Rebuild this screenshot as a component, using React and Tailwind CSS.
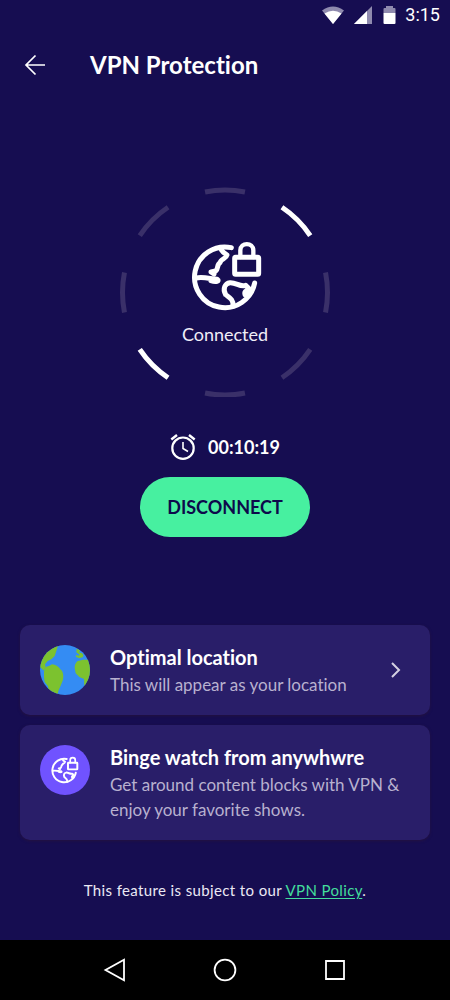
import React from 'react';

function StatusBar() {
  return (
    <div className="flex h-[30px] items-center justify-end gap-[9px] pr-[10px] font-[Roboto,sans-serif]">
      <svg className="h-[18px] w-6" viewBox="0 0 24 18" aria-hidden="true">
        <path d="M1 4.5Q12-3.5 23 4.5L12 18Z" fill="#8f8aae" />
        <path d="M3.5 7.5Q12 1.8 20.5 7.5L12 18Z" fill="#fff" />
      </svg>
      <svg className="h-[18px] w-[18px]" viewBox="0 0 18 18" aria-hidden="true">
        <path d="M18 0V18H0Z" fill="#8f8aae" />
        <path d="M13 5V18H0Z" fill="#fff" />
      </svg>
      <svg className="ml-[2px] h-[18px] w-[13px]" viewBox="0 0 13 18" aria-hidden="true">
        <path d="M3 0H10V2H11.5Q12.5 2 12.5 3V7H.5V3Q.5 2 1.5 2H3Z" fill="#8f8aae" />
        <path d="M.5 7H12.5V17Q12.5 18 11.5 18H1.5Q.5 18 .5 17Z" fill="#fff" />
      </svg>
      <span className="text-[18px] leading-[30px] text-white">3:15</span>
    </div>
  );
}

function LockedGlobe({ className }) {
  return (
    <svg
      className={className}
      viewBox="243 195 216 216"
      fill="none"
      stroke="#fff"
      strokeWidth="15"
      strokeLinecap="round"
      strokeLinejoin="round"
      aria-hidden="true"
    >
      <path d="M364 218A91 91 0 1 0 434 324" />
      <path d="M334 224L340 232L351 240C348 253 333 250 330 263C320 268 326 281 317 288L303 291L312 297" />
      <path d="M258 309C280 304 302 312 322 313C330 318 318 323 303 317" />
      <path d="M369 392C371 373 357 367 347 359C337 341 345 325 360 323C380 322 389 337 407 331L416 340C413 351 401 344 405 359L416 356" />
      <rect x="374" y="247" width="72" height="51" rx="3" />
      <path d="M391 246V226C391 201 430 201 430 226V246" strokeWidth="13" />
    </svg>
  );
}

function ConnectionRing() {
  return (
    <div className="grid h-[210px] w-[210px] place-items-center">
      <svg
        className="col-start-1 row-start-1 h-full w-full"
        viewBox="0 0 210 210"
        fill="none"
        strokeWidth="5"
        aria-hidden="true"
      >
        <circle cx="105" cy="105.5" r="102.5" pathLength="16" stroke="#3a3069" strokeDasharray="1 1" strokeDashoffset="0.5" />
        <circle cx="105" cy="105.5" r="102.5" pathLength="16" stroke="#fff" strokeDasharray="1 7" strokeDashoffset="-5.5" />
      </svg>
      <div className="col-start-1 row-start-1 flex flex-col items-center gap-[10px] pt-[2px]">
        <LockedGlobe className="ml-[4px] h-[72px] w-[72px]" />
        <p className="text-[18px] leading-6 text-[#f0eef8]">Connected</p>
      </div>
    </div>
  );
}

function AlarmClock() {
  return (
    <svg className="h-[26px] w-[26px]" viewBox="0 0 26 26" fill="none" stroke="#fff" strokeWidth="2.2" aria-hidden="true">
      <circle cx="13" cy="14.2" r="10.7" />
      <path d="M13 8V14.5L18 17.5" strokeWidth="1.6" />
      <path d="M1.3 5.5L7 1M19 1L24.7 5.5" strokeWidth="2.4" />
    </svg>
  );
}

function Earth() {
  return (
    <svg className="h-[50px] w-[50px] shrink-0" viewBox="0 0 150 150" aria-hidden="true">
      <defs>
        <clipPath id="earth-disc">
          <circle cx="75" cy="75" r="75" />
        </clipPath>
      </defs>
      <g clipPath="url(#earth-disc)">
        <path d="M0 0H150V150H0Z" fill="#348cf3" />
        <g fill="#7cc22f">
          <path d="M0 0H55L49 18L44 33L34 43L23 48L15 58L17 66L12 77L0 66Z" />
          <path d="M12 79L17 66L28 62L36 58Q52 60 61 73Q69 78 70 94L69 104L62 122L56 135L52 150H40L25 132L24 124L14 111L12 97Z" />
          <path d="M110 11L120 16L118 23L125 24L130 29L129 36L118 40L107 35L109 30L116 32L119 29L109 22Z" />
          <path d="M150 44H130L113 48Q103 56 104 70L107 85L118 96L132 102L133 125L150 120Z" />
        </g>
      </g>
    </svg>
  );
}

function InfoCard({ icon, title, children, trailing }) {
  return (
    <section className="flex items-start gap-5 rounded-[10px] bg-[#291e69] px-5 pt-5 pb-[18px] shadow-[0_1px_3px_#24123f]">
      {icon}
      <div className="flex min-w-0 flex-1 flex-col gap-[2px]">
        <h2 className="text-[20px] leading-[25px] font-bold text-white">{title}</h2>
        <p className="text-[17px] leading-[25px] text-[#b8b1cf]">{children}</p>
      </div>
      {trailing}
    </section>
  );
}

function NavigationBar() {
  return (
    <nav className="flex h-[60px] items-center justify-center gap-[86px] bg-black" aria-label="System">
      <button type="button" aria-label="Back" className="h-6 w-6">
        <svg viewBox="0 0 24 24" fill="none" stroke="#fff" strokeWidth="1.8">
          <path d="M21 1.8V22.2L2.5 12Z" />
        </svg>
      </button>
      <button type="button" aria-label="Home" className="h-6 w-6">
        <svg viewBox="0 0 24 24" fill="none" stroke="#fff" strokeWidth="1.8">
          <circle cx="12" cy="12" r="10.4" />
        </svg>
      </button>
      <button type="button" aria-label="Recent apps" className="h-6 w-6">
        <svg viewBox="0 0 24 24" fill="none" stroke="#fff" strokeWidth="1.8">
          <path d="M3 3H21V21H3Z" />
        </svg>
      </button>
    </nav>
  );
}

export default function App() {
  return (
    <div className="flex min-h-screen flex-col bg-[#160d51] font-[Lato,sans-serif] text-white [font-variant-ligatures:none]">
      <StatusBar />
      <header className="flex h-[70px] items-center gap-[43px] px-[23px]">
        <button type="button" aria-label="Go back" className="h-6 w-6">
          <svg viewBox="0 0 24 24" fill="none" stroke="#fff" strokeWidth="1.7">
            <path d="M22 12H3.5M12.5 2.5L3 12L12.5 21.5" />
          </svg>
        </button>
        <h1 className="text-[24px] leading-8 font-bold">VPN Protection</h1>
      </header>
      <main className="flex flex-1 flex-col">
        <div className="flex flex-col items-center pt-[87px]">
          <ConnectionRing />
          <div className="mt-9 flex items-center gap-3">
            <AlarmClock />
            <time className="text-[18px] leading-7 font-bold">00:10:19</time>
          </div>
          <button
            type="button"
            className="mt-4 h-[60px] rounded-full bg-[#47f0a0] px-[27px] text-[18px] leading-6 font-bold text-[#0d0a4b]"
          >
            DISCONNECT
          </button>
        </div>
        <div className="mt-[88px] flex flex-col gap-[10px] px-5">
          <InfoCard
            icon={<Earth />}
            title="Optimal location"
            trailing={
              <svg className="mr-[8px] h-[50px] w-3" viewBox="0 0 12 50" fill="none" stroke="#d4d0e2" strokeWidth="2" aria-hidden="true">
                <path d="M2 18L9 25L2 32" />
              </svg>
            }
          >
            This will appear as your location
          </InfoCard>
          <InfoCard
            icon={
              <div className="flex h-[50px] w-[50px] shrink-0 items-center justify-center rounded-full bg-[#7053ff]">
                <LockedGlobe className="h-7 w-7" />
              </div>
            }
            title="Binge watch from anywhwre"
          >
            Get around content blocks with VPN &amp; enjoy your favorite shows.
          </InfoCard>
        </div>
        <p className="mt-auto px-5 pb-[38px] text-center text-[15px] leading-6 tracking-wide text-[#ebe8f4]">
          This feature is subject to our{' '}
          <a href="#vpn-policy" className="text-[#43dd9c] underline underline-offset-2">
            VPN Policy
          </a>
          .
        </p>
      </main>
      <NavigationBar />
    </div>
  );
}
